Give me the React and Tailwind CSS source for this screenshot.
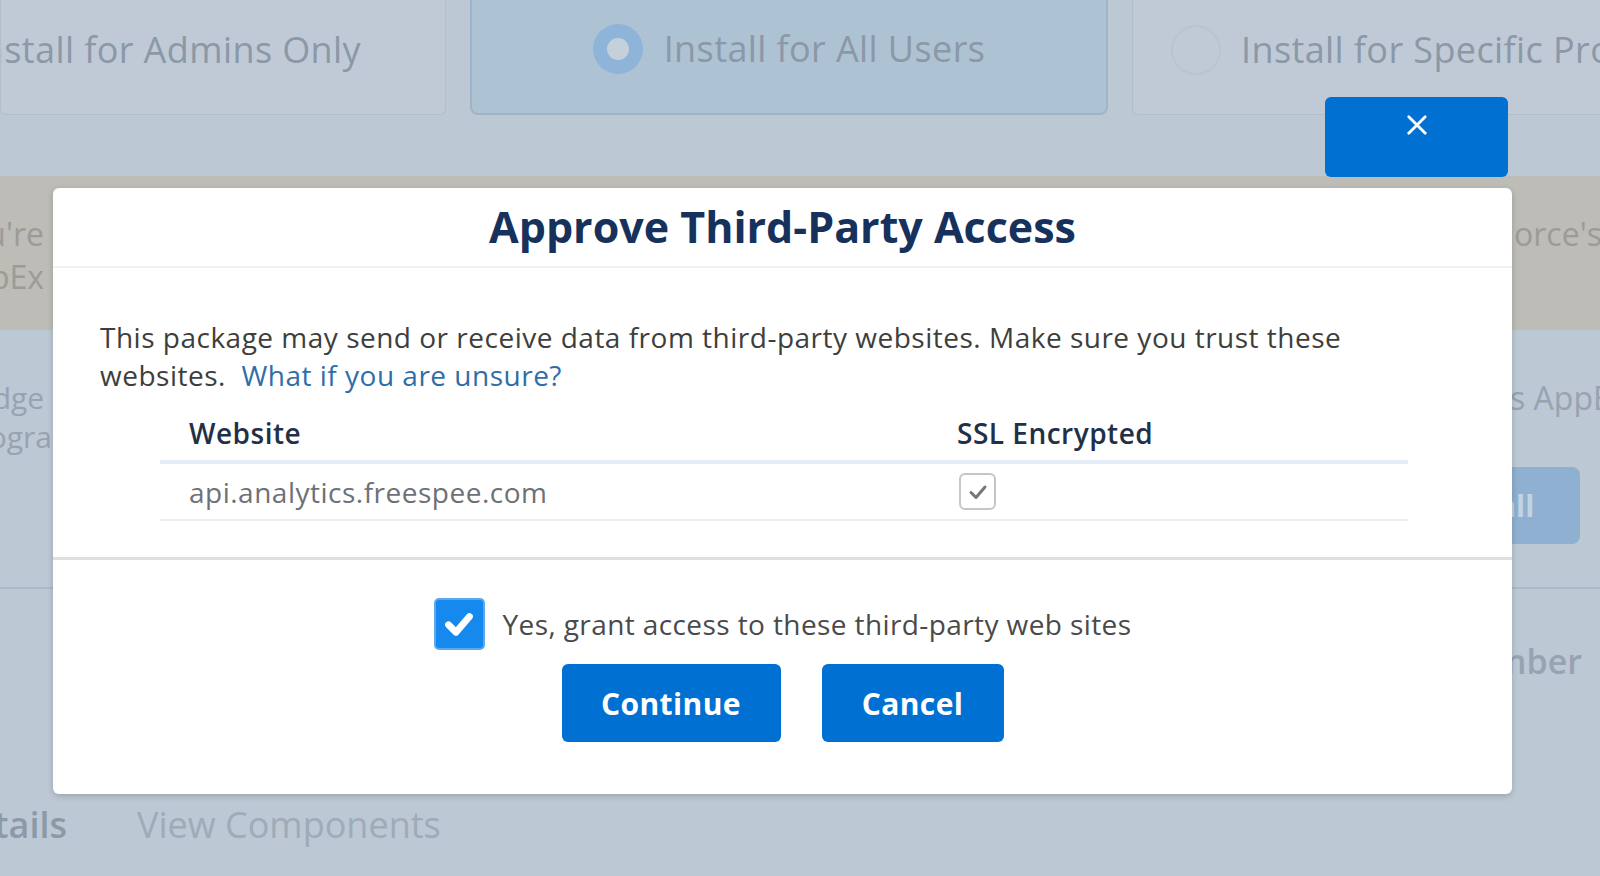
import React from 'react';

function Radio({ selected }) {
  return selected ? (
    <div className="w-[50px] h-[50px] rounded-full bg-[#8fb4d9] flex items-center justify-center shrink-0">
      <div className="w-[22px] h-[22px] rounded-full bg-[#c4d0da]" />
    </div>
  ) : (
    <div className="w-[50px] h-[50px] rounded-full border-2 border-[#b8c4cf] shrink-0" />
  );
}

function CheckIcon({ className, strokeWidth }) {
  return (
    <svg viewBox="0 0 24 24" className={className} fill="none" stroke="currentColor" strokeWidth={strokeWidth} strokeLinecap="round" strokeLinejoin="round">
      <polyline points="5,12.5 10,17.5 19,7" />
    </svg>
  );
}

export default function App() {
  return (
    <div className="relative w-[1600px] h-[876px] overflow-hidden bg-[#bcc8d4] font-['Open_Sans',sans-serif]">
      {/* page behind the overlay */}
      <div className="flex -mt-[15px] h-[130px] gap-[24px]">
        <div className="w-[446px] shrink-0 flex items-center justify-end pr-[84px] border border-t-0 border-[#b2bfcb] rounded-b-[6px] bg-[#bfcad6] overflow-hidden">
          <span className="text-[36px] tracking-[0.4px] text-[#8b98a6] whitespace-nowrap">Install for Admins Only</span>
        </div>
        <div className="w-[638px] shrink-0 flex items-center justify-center gap-[21px] border-2 border-t-0 border-[#9fb4c6] rounded-b-[8px] bg-[#adc2d3]">
          <Radio selected />
          <span className="text-[36px] tracking-[0.4px] text-[#8b98a6] whitespace-nowrap">Install for All Users</span>
        </div>
        <div className="flex-1 flex items-center gap-[20px] pl-[38px] border border-t-0 border-r-0 border-[#b2bfcb] rounded-bl-[6px] bg-[#bfcad6]">
          <Radio />
          <span className="text-[36px] tracking-[0.4px] text-[#8b98a6] whitespace-nowrap">Install for Specific Profiles...</span>
        </div>
      </div>

      <div className="h-[61px]" />

      <div className="h-[154px] bg-[#bdbcb7] flex justify-between pt-[36px]">
        <div className="w-[44px] overflow-hidden flex flex-col items-end text-[32px] leading-[43px] text-[#9c9b98] whitespace-nowrap">
          <span>You're</span>
          <span>AppEx</span>
        </div>
        <div className="w-[86px] overflow-hidden text-[32px] leading-[43px] text-[#9c9b98] whitespace-nowrap">
          <span>orce's</span>
        </div>
      </div>

      <div className="h-[259px] flex justify-between border-b-2 border-[#adbac7]">
        <div className="w-[52px] overflow-hidden flex flex-col items-end pt-[48px] text-[30px] leading-[39px] text-[#97a3b0] whitespace-nowrap">
          <span>knowledge&nbsp;</span>
          <span>progra</span>
        </div>
        <div className="w-[90px] flex flex-col pt-[48px]">
          <span className="text-[32px] leading-[39px] text-[#97a3b0] whitespace-nowrap overflow-hidden">s AppExchange</span>
          <div className="mt-[50px] w-[70px] h-[77px] rounded-r-[8px] bg-[#8fb0d0] flex items-center">
            <span className="text-[30px] font-bold text-[#c2d3e3] -ml-[12px]">all</span>
          </div>
        </div>
      </div>

      <div className="flex justify-end pr-[18px] pt-[47px]">
        <span className="text-[34px] font-semibold text-[#97a3b0]">Member</span>
      </div>

      <div className="flex items-center gap-[70px] mt-[111px]">
        <div className="w-[67px] overflow-hidden flex justify-end">
          <span className="text-[36px] font-semibold text-[#8c99a7] whitespace-nowrap">Details</span>
        </div>
        <span className="text-[36px] text-[#9eabb8]">View Components</span>
      </div>

      {/* close button */}
      <button className="absolute left-[1325px] top-[97px] w-[183px] h-[80px] rounded-[6px] bg-[#0070d2] flex justify-center pt-[17px]">
        <svg viewBox="0 0 24 24" className="w-[22px] h-[22px] text-white" fill="none" stroke="currentColor" strokeWidth="3" strokeLinecap="round">
          <line x1="3" y1="3" x2="21" y2="21" />
          <line x1="21" y1="3" x2="3" y2="21" />
        </svg>
      </button>

      {/* modal */}
      <div className="absolute left-[53px] top-[188px] w-[1459px] h-[606px] bg-white rounded-[6px] shadow-[0_2px_6px_rgba(0,0,0,0.18)] flex flex-col">
        <div className="h-[80px] shrink-0 flex items-center justify-center border-b-2 border-[#eef1f5]">
          <h2 className="text-[43px] font-bold text-[#16325c]">Approve Third-Party Access</h2>
        </div>

        <div className="h-[292px] shrink-0 pl-[47px] pr-[104px] pt-[50px] border-b-[3px] border-[#dfdfdf]">
          <p className="text-[28px] tracking-[0.5px] leading-[38px] text-[#3e3e3c]">
            This package may send or receive data from third-party websites. Make sure you trust these websites.&nbsp; <a className="text-[#2f6ea8]">What if you are unsure?</a>
          </p>
          <div className="ml-[60px] mt-[20px]">
            <div className="grid grid-cols-[797px_1fr] border-b-4 border-[#e5edf6] pb-[8px]">
              <div className="pl-[29px] text-[28px] tracking-[0.5px] leading-[38px] font-semibold text-[#1f3148]">Website</div>
              <div className="text-[28px] tracking-[0.5px] leading-[38px] font-semibold text-[#1f3148]">SSL Encrypted</div>
            </div>
            <div className="grid grid-cols-[797px_1fr] h-[57px] items-center border-b-2 border-[#eeeeee]">
              <div className="pl-[29px] text-[28px] tracking-[0.5px] text-[#6d7177]">api.analytics.freespee.com</div>
              <div className="pl-[2px]">
                <div className="w-[37px] h-[37px] rounded-[6px] border-2 border-[#c6c6c6] flex items-center justify-center text-[#777777]">
                  <CheckIcon className="w-[24px] h-[24px]" strokeWidth={3} />
                </div>
              </div>
            </div>
          </div>
        </div>

        <div className="flex-1 flex flex-col items-center pt-[38px]">
          <div className="flex items-center gap-[18px]">
            <div className="w-[51px] h-[52px] rounded-[5px] bg-[#1589ee] border-2 border-[#5aa9f0] flex items-center justify-center text-white">
              <CheckIcon className="w-[36px] h-[36px]" strokeWidth={4.5} />
            </div>
            <span className="text-[28px] tracking-[0.4px] text-[#4a4a4a]">Yes, grant access to these third-party web sites</span>
          </div>
          <div className="flex gap-[41px] mt-[14px]">
            <button className="w-[219px] h-[78px] rounded-[6px] bg-[#0070d2] text-white text-[30px] tracking-[0.4px] font-bold">Continue</button>
            <button className="w-[182px] h-[78px] rounded-[6px] bg-[#0070d2] text-white text-[30px] tracking-[0.4px] font-bold">Cancel</button>
          </div>
        </div>
      </div>
    </div>
  );
}
